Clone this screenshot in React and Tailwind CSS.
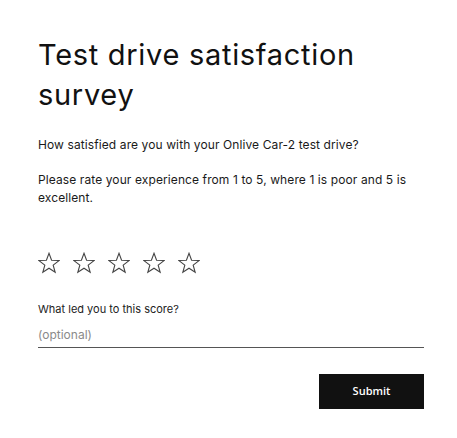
import { useState } from "react";

const Star = () => (
  <svg width="22" height="22" viewBox="0 0 22 22" fill="none">
    <polygon
      points="11,1.3 13.59,8.24 20.99,8.56 15.18,13.16 17.17,20.29 11,16.2 4.83,20.29 6.82,13.16 1.01,8.56 8.41,8.24"
      stroke="#444"
      strokeWidth="1.1"
      strokeLinejoin="miter"
    />
  </svg>
);

const App = () => {
  const [comment, setComment] = useState("");

  return (
    <div className="w-[457px] min-h-[438px] bg-white pl-[38px] pr-[33px] pt-[35px] font-['Inter',sans-serif] text-[#1a1a1a]">
      <h1 className="text-[29px] leading-[40px] tracking-[0.7px] font-normal text-[#111]">
        Test drive satisfaction survey
      </h1>

      <p className="mt-[21px] text-[12px] tracking-[0.1px] leading-[17.5px]">
        How satisfied are you with your Onlive Car-2 test drive?
      </p>
      <p className="mt-[17.5px] text-[12px] tracking-[0.1px] leading-[17.5px]">
        Please rate your experience from 1 to 5, where 1 is poor and 5 is excellent.
      </p>

      {/* Rating */}
      <div className="mt-[46px] flex gap-[13px]">
        {[1, 2, 3, 4, 5].map((n) => (
          <button key={n} className="w-[22px] h-[22px]" aria-label={`${n} stars`}>
            <Star />
          </button>
        ))}
      </div>

      <label className="block mt-[27px] text-[11px] leading-[16px] text-[#222]">
        What led you to this score?
      </label>
      <input
        value={comment}
        onChange={(e) => setComment(e.target.value)}
        placeholder="(optional)"
        className="mt-[7px] block w-full h-[24px] pb-[2px] border-b border-[#555] text-[12px] leading-[18px] outline-none placeholder:text-[#8a8a8a]"
      />

      <div className="mt-[26px] flex justify-end">
        <button className="w-[105px] h-[35px] bg-[#111] text-white text-[11px] font-semibold font-['Open_Sans',sans-serif]">
          Submit
        </button>
      </div>
    </div>
  );
};

export default App;
